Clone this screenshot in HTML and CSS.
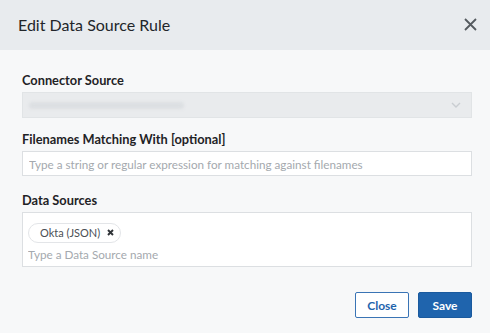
FILE: index.html
```html
<!DOCTYPE html>
<html lang="en">

<head>
  <meta charset="UTF-8" />
  <title>Edit Data Source Rule</title>
  <link rel="stylesheet" href="styles.css">
</head>

<body>
  <div class="modal">
    <div class="modal-header">
      <h1>Edit Data Source Rule</h1>
      <button class="close-x" aria-label="Close">
        <svg width="13" height="13" viewBox="0 0 13 13">
          <path d="M1 1 L12 12 M12 1 L1 12" stroke="#555a5f" stroke-width="1.8" fill="none" />
        </svg>
      </button>
    </div>

    <div class="modal-body">
      <div class="field">
        <label>Connector Source</label>
        <div class="select">
          <span class="blur-text"></span>
          <svg class="chevron" width="10" height="6" viewBox="0 0 10 6">
            <path d="M1 1 L5 5 L9 1" stroke="#c9cdd1" stroke-width="1.4" fill="none" />
          </svg>
        </div>
      </div>

      <div class="field">
        <label>Filenames Matching With [optional]</label>
        <input class="text-input" type="text" placeholder="Type a string or regular expression for matching against filenames" />
      </div>

      <div class="field field-tags">
        <label>Data Sources</label>
        <div class="tag-box">
          <span class="tag">Okta (JSON)
            <svg class="tag-x" width="7" height="7" viewBox="0 0 7 7">
              <path d="M1 1 L6 6 M6 1 L1 6" stroke="#2f3337" stroke-width="1.9" fill="none" />
            </svg>
          </span>
          <input class="tag-input" type="text" placeholder="Type a Data Source name" />
        </div>
      </div>
    </div>

    <div class="modal-footer">
      <button class="btn btn-secondary">Close</button>
      <button class="btn btn-primary">Save</button>
    </div>
  </div>
</body>

</html>
```

FILE: styles.css
```css
:root {
  --header: #e8ebee;
  --body: #f7f8f9;
  --text: #1f2326;
  --muted: #a4a9ae;
  --border: #dcdfe2;
  --blue: #1f64ad;
}
* {
  box-sizing: border-box;
  margin: 0;
  padding: 0;
}
body {
  background: var(--body);
  color: var(--text);
  font-family: Lato, "Open Sans", sans-serif;
}
.modal {
  width: 490px;
  height: 333px;
  display: flex;
  flex-direction: column;
}
.modal-header {
  height: 50px;
  background: var(--header);
  display: flex;
  align-items: center;
  justify-content: space-between;
  padding: 0 13px 2px 18px;
}
.modal-header h1 {
  font-size: 16px;
  font-weight: 400;
  color: #22262a;
}
.close-x {
  background: none;
  border: none;
  width: 13px;
  height: 13px;
  display: flex;
}
.modal-body {
  padding: 22px 18px 0 22px;
}
.field {
  margin-bottom: 13px;
}
.field-tags {
  padding-top: 3px;
}
.field label {
  display: block;
  font-size: 12.8px;
  line-height: 16px;
  font-weight: 700;
  color: var(--text);
  margin-bottom: 4px;
}
.select {
  height: 26px;
  background: #e9ebed;
  border: 1px solid #e1e4e6;
  display: flex;
  align-items: center;
  justify-content: space-between;
  padding: 0 10px 0 6px;
}
.blur-text {
  width: 155px;
  height: 7px;
  border-radius: 4px;
  background: #dcdfe2;
  filter: blur(1.5px);
}
.text-input {
  width: 100%;
  height: 25px;
  border: 1px solid var(--border);
  background: #fff;
  padding: 0 6px;
  font-family: inherit;
  font-size: 11.7px;
}
.text-input::placeholder,
.tag-input::placeholder {
  color: var(--muted);
}
.tag-box {
  height: 55px;
  border: 1px solid var(--border);
  background: #fff;
  padding: 8px 5px 0 5px;
}
.tag {
  display: inline-flex;
  align-items: center;
  gap: 7px;
  height: 20px;
  padding: 0 6px 0 11px;
  border: 1px solid #e3e5e8;
  border-radius: 10px;
  font-size: 11px;
  color: #4b5055;
}
.tag-input {
  display: block;
  width: 100%;
  border: none;
  outline: none;
  background: none;
  margin-top: 4px;
  font-family: inherit;
  font-size: 11.7px;
}
.modal-footer {
  display: flex;
  justify-content: flex-end;
  gap: 9px;
  padding: 12px 18px 0 0;
}
.btn {
  width: 54px;
  height: 26px;
  font-family: inherit;
  font-size: 12px;
  font-weight: 700;
  border-radius: 2px;
  cursor: pointer;
}
.btn-secondary {
  background: #fff;
  color: var(--blue);
  border: 1px solid #3a74b5;
}
.btn-primary {
  background: var(--blue);
  color: #fff;
  border: 1px solid #1a5a9e;
}
```
